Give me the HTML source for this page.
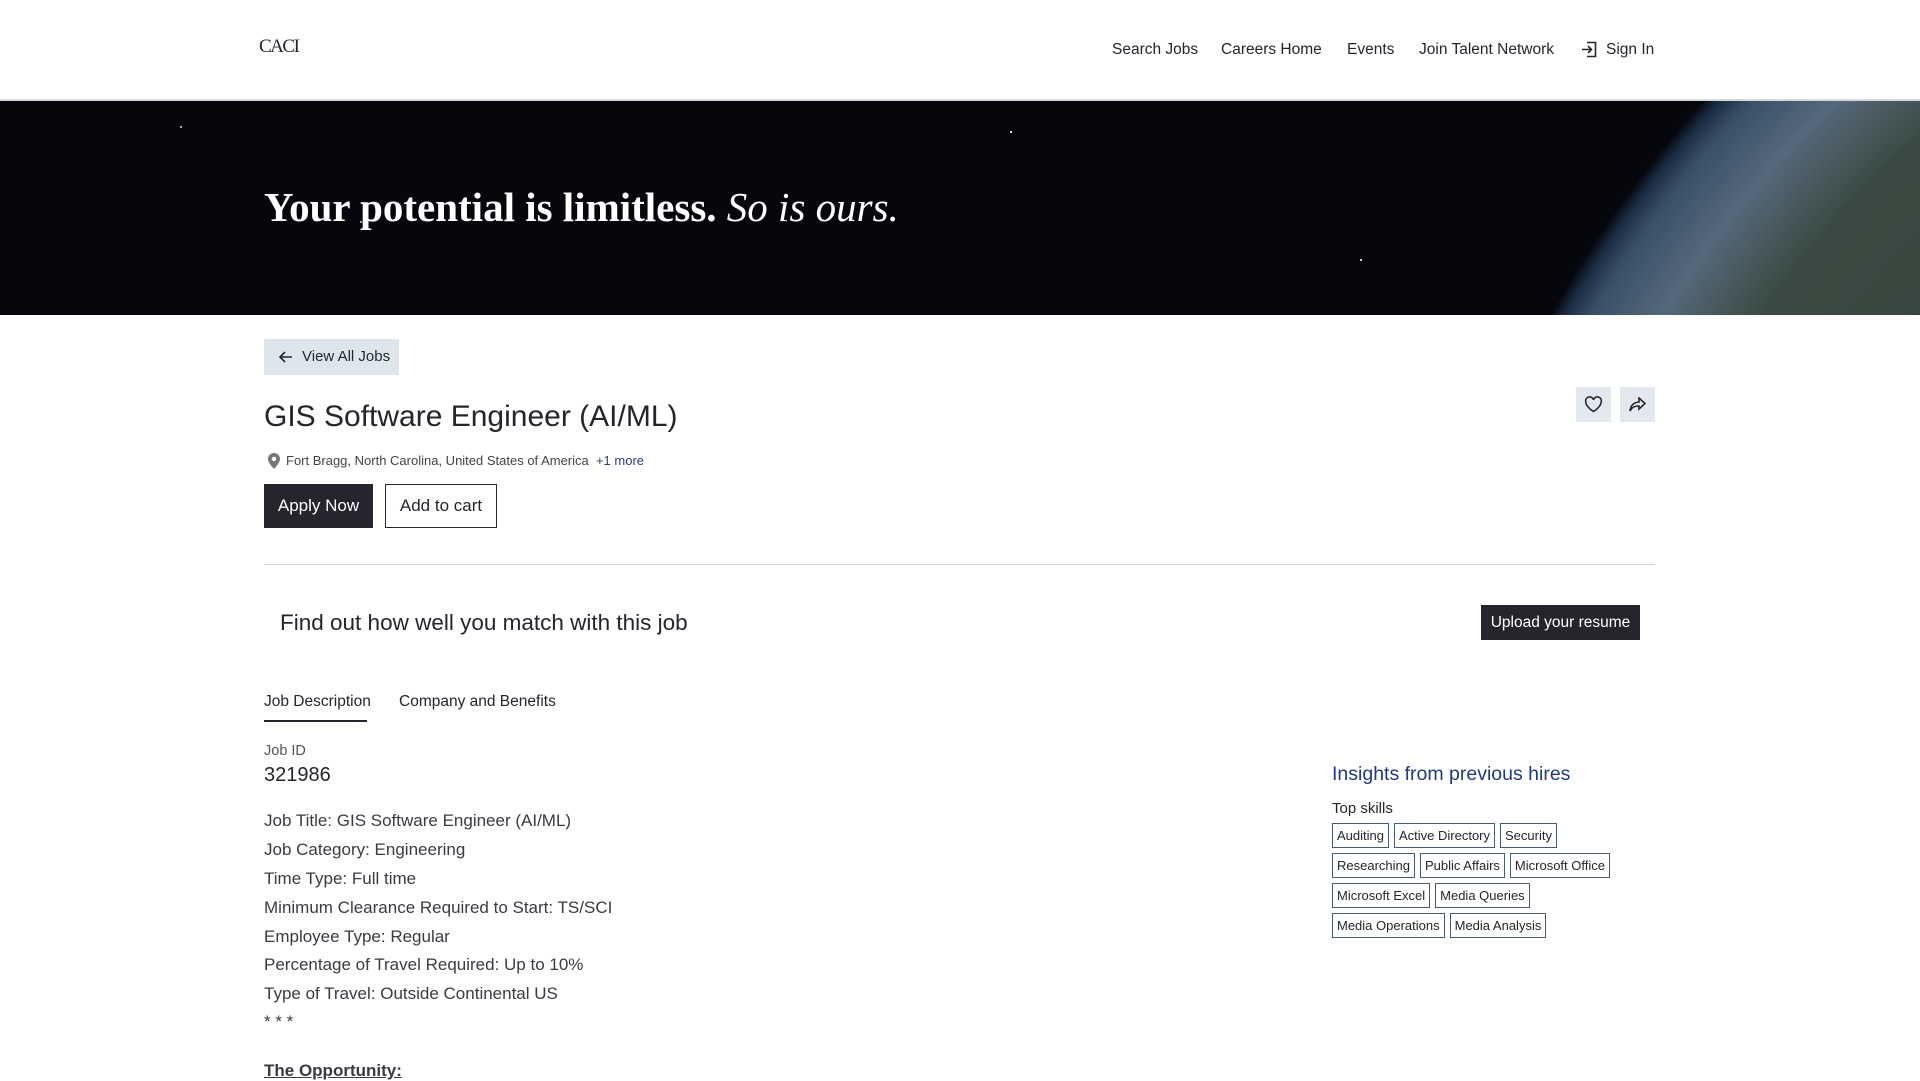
<!DOCTYPE html>
<html><head><meta charset="utf-8"><style>
*{margin:0;padding:0;box-sizing:border-box}
body{width:1920px;height:1080px;overflow:hidden;background:#fff;font-family:"Liberation Sans",sans-serif;color:#25252d;position:relative}
.a{position:absolute;white-space:nowrap}
.nav{font-size:15.5px;color:#25252d;top:41px}
.hero{position:absolute;left:0;top:99px;width:1920px;height:216px;background:radial-gradient(circle 1203px at 2600px 801px,#2e3a30 0%,#3a4a42 85%,#56687a 92%,#3a5068 97%,#1a2a40 99%,#05070d 100%);overflow:hidden;border-top:2px solid #d8d8d8}
.tag{display:inline-block;border:1px solid #4a5a70;font-size:13px;padding:0 4px;height:25px;line-height:23px;margin-right:5px;color:#25252d}
.row{position:absolute;left:1332px}
.dl{font-size:17px;color:#3a3a42;left:264px}
</style></head><body>
<div class="a" style="left:259px;top:36px;font-family:'Liberation Serif',serif;font-size:19px;letter-spacing:-1.5px">CACI</div>
<div class="a nav" style="left:1112px">Search Jobs</div>
<div class="a nav" style="left:1221px">Careers Home</div>
<div class="a nav" style="left:1347px">Events</div>
<div class="a nav" style="left:1419px">Join Talent Network</div>
<svg class="a" style="left:1581px;top:41px" width="17" height="17" viewBox="0 0 17 17" fill="none" stroke="#25252d" stroke-width="1.6"><path d="M6 1.5h8.5v14H6M1 8.5h9M7 5l3.5 3.5L7 12"/></svg>
<div class="a nav" style="left:1606px">Sign In</div>
<div class="hero">
<div class="a" style="left:264px;top:82px;font-family:'Liberation Serif',serif;font-size:41px;font-weight:bold;color:#fff">Your potential is limitless. <i style="font-weight:normal">So is ours.</i></div>
<div class="a" style="left:180px;top:25px;width:2px;height:2px;background:#aaa"></div>
<div class="a" style="left:1010px;top:30px;width:2px;height:2px;background:#ddd"></div>
<div class="a" style="left:360px;top:120px;width:2px;height:2px;background:#999"></div>
<div class="a" style="left:1360px;top:158px;width:2px;height:2px;background:#ccc"></div>
</div>
<div class="a" style="left:264px;top:339px;width:135px;height:36px;background:#dde6ec;font-size:15px;line-height:36px;padding-left:38px">View All Jobs</div>
<svg class="a" style="left:278px;top:349px" width="16" height="16" viewBox="0 0 16 16" fill="none" stroke="#25252d" stroke-width="1.6"><path d="M14 8H2M7 3L2 8l5 5"/></svg>
<div class="a" style="left:264px;top:400px;font-size:30px;color:#25252d">GIS Software Engineer (AI/ML)</div>
<div class="a" style="left:1576px;top:387px;width:35px;height:35px;background:#e2e8ee"></div>
<svg class="a" style="left:1584px;top:396px" width="19" height="17" viewBox="0 0 24 22" fill="none" stroke="#25252d" stroke-width="2"><path d="M12 20S2 14 2 7.5A5 5 0 0 1 12 5a5 5 0 0 1 10 2.5C22 14 12 20 12 20z"/></svg>
<div class="a" style="left:1620px;top:387px;width:35px;height:35px;background:#e2e8ee"></div>
<svg class="a" style="left:1629px;top:397px" width="17" height="15" viewBox="0 0 17 15"><path d="M10 1l6 5.5-6 5.5V9C5 9 2.5 10.5 1 14c.5-5 3-8.5 9-9z" fill="none" stroke="#25252d" stroke-width="1.6"/></svg>
<svg class="a" style="left:268px;top:453px" width="12" height="16" viewBox="0 0 12 16"><path d="M6 0a6 6 0 0 1 6 6c0 4-6 10-6 10S0 10 0 6a6 6 0 0 1 6-6z" fill="#777"/><circle cx="6" cy="6" r="2.2" fill="#fff"/></svg>
<div class="a" style="left:286px;top:453px;font-size:13px;color:#444">Fort Bragg, North Carolina, United States of America &nbsp;<span style="color:#2a3f8a">+1 more</span></div>
<div class="a" style="left:264px;top:484px;width:109px;height:44px;background:#25252d;color:#fff;font-size:17px;line-height:44px;text-align:center">Apply Now</div>
<div class="a" style="left:385px;top:484px;width:112px;height:44px;border:1px solid #25252d;font-size:17px;line-height:42px;text-align:center">Add to cart</div>
<div class="a" style="left:264px;top:564px;width:1391px;height:1px;background:#d4d4d4"></div>
<div class="a" style="left:280px;top:610px;font-size:22.5px">Find out how well you match with this job</div>
<div class="a" style="left:1481px;top:605px;width:159px;height:35px;background:#25252d;color:#fff;font-size:15.5px;line-height:35px;text-align:center">Upload your resume</div>
<div class="a" style="left:264px;top:693px;font-size:15.5px">Job Description</div>
<div class="a" style="left:264px;top:720px;width:103px;height:2px;background:#25252d"></div>
<div class="a" style="left:399px;top:693px;font-size:15.5px">Company and Benefits</div>
<div class="a" style="left:264px;top:743px;font-size:14.5px;color:#555">Job ID</div>
<div class="a" style="left:264px;top:764px;font-size:20px">321986</div>
<div class="a dl" style="top:811px">Job Title: GIS Software Engineer (AI/ML)</div>
<div class="a dl" style="top:840px">Job Category: Engineering</div>
<div class="a dl" style="top:869px">Time Type: Full time</div>
<div class="a dl" style="top:898px">Minimum Clearance Required to Start: TS/SCI</div>
<div class="a dl" style="top:927px">Employee Type: Regular</div>
<div class="a dl" style="top:955px">Percentage of Travel Required: Up to 10%</div>
<div class="a dl" style="top:984px">Type of Travel: Outside Continental US</div>
<div class="a dl" style="top:1012px">* * *</div>
<div class="a dl" style="top:1061px;font-weight:bold;text-decoration:underline">The Opportunity:</div>
<div class="a" style="left:1332px;top:763px;font-size:19.5px;color:#1f3a80">Insights from previous hires</div>
<div class="a" style="left:1332px;top:800px;font-size:15px">Top skills</div>
<div class="row" style="top:823px"><span class="tag">Auditing</span><span class="tag">Active Directory</span><span class="tag">Security</span></div>
<div class="row" style="top:853px"><span class="tag">Researching</span><span class="tag">Public Affairs</span><span class="tag">Microsoft Office</span></div>
<div class="row" style="top:883px"><span class="tag">Microsoft Excel</span><span class="tag">Media Queries</span></div>
<div class="row" style="top:913px"><span class="tag">Media Operations</span><span class="tag">Media Analysis</span></div>
</body></html>
